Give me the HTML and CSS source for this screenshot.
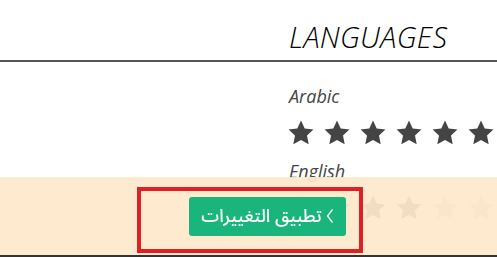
FILE: index.html
```html
<!DOCTYPE html>
<html lang="en">
<head>
    <meta charset="UTF-8">
    <meta name="viewport" content="width=device-width, initial-scale=1.0">
    <title>Languages</title>
    <link rel="stylesheet" href="styles.css">
</head>
<body>
    <div class="section-head">
        <h2 class="section-title">LANGUAGES</h2>
    </div>

    <div class="languages">
        <div class="lang">
            <div class="lang-name">Arabic</div>
            <div class="stars">
                <svg class="star" viewBox="0 0 26 26"><path d="M13 .5l3.7 8 8.76 1.05-6.47 6 1.71 8.65L13 19.9l-7.7 4.3 1.71-8.65-6.47-6L9.3 8.5z"/></svg>
                <svg class="star" viewBox="0 0 26 26"><path d="M13 .5l3.7 8 8.76 1.05-6.47 6 1.71 8.65L13 19.9l-7.7 4.3 1.71-8.65-6.47-6L9.3 8.5z"/></svg>
                <svg class="star" viewBox="0 0 26 26"><path d="M13 .5l3.7 8 8.76 1.05-6.47 6 1.71 8.65L13 19.9l-7.7 4.3 1.71-8.65-6.47-6L9.3 8.5z"/></svg>
                <svg class="star" viewBox="0 0 26 26"><path d="M13 .5l3.7 8 8.76 1.05-6.47 6 1.71 8.65L13 19.9l-7.7 4.3 1.71-8.65-6.47-6L9.3 8.5z"/></svg>
                <svg class="star" viewBox="0 0 26 26"><path d="M13 .5l3.7 8 8.76 1.05-6.47 6 1.71 8.65L13 19.9l-7.7 4.3 1.71-8.65-6.47-6L9.3 8.5z"/></svg>
                <svg class="star" viewBox="0 0 26 26"><path d="M13 .5l3.7 8 8.76 1.05-6.47 6 1.71 8.65L13 19.9l-7.7 4.3 1.71-8.65-6.47-6L9.3 8.5z"/></svg>
            </div>
        </div>
        <div class="lang">
            <div class="lang-name">English</div>
            <div class="stars">
                <svg class="star" viewBox="0 0 26 26"><path d="M13 .5l3.7 8 8.76 1.05-6.47 6 1.71 8.65L13 19.9l-7.7 4.3 1.71-8.65-6.47-6L9.3 8.5z"/></svg>
                <svg class="star" viewBox="0 0 26 26"><path d="M13 .5l3.7 8 8.76 1.05-6.47 6 1.71 8.65L13 19.9l-7.7 4.3 1.71-8.65-6.47-6L9.3 8.5z"/></svg>
                <svg class="star" viewBox="0 0 26 26"><path d="M13 .5l3.7 8 8.76 1.05-6.47 6 1.71 8.65L13 19.9l-7.7 4.3 1.71-8.65-6.47-6L9.3 8.5z"/></svg>
                <svg class="star" viewBox="0 0 26 26"><path d="M13 .5l3.7 8 8.76 1.05-6.47 6 1.71 8.65L13 19.9l-7.7 4.3 1.71-8.65-6.47-6L9.3 8.5z"/></svg>
                <svg class="star off" viewBox="0 0 26 26"><path d="M13 .5l3.7 8 8.76 1.05-6.47 6 1.71 8.65L13 19.9l-7.7 4.3 1.71-8.65-6.47-6L9.3 8.5z"/></svg>
                <svg class="star off" viewBox="0 0 26 26"><path d="M13 .5l3.7 8 8.76 1.05-6.47 6 1.71 8.65L13 19.9l-7.7 4.3 1.71-8.65-6.47-6L9.3 8.5z"/></svg>
            </div>
        </div>
    </div>

    <div class="apply-bar">
        <div class="highlight">
            <button class="apply-btn" dir="rtl" lang="ar">
                <svg class="chevron" viewBox="0 0 8 16"><polyline points="6.5,1.5 1.5,8 6.5,14.5"/></svg>
                <span>تطبيق التغييرات</span>
            </button>
        </div>
    </div>
</body>
</html>
```

FILE: styles.css
```css
body {
    margin: 0;
    padding: 0;
    background: #fff;
    font-family: "Open Sans", "Noto Sans", sans-serif;
    color: #444;
    height: 257px;
    overflow: hidden;
}

.section-head {
    padding-left: 289px;
    border-bottom: 2px solid #555;
}

.section-title {
    margin: 0;
    padding: 22px 0 9px;
    font-size: 29px;
    line-height: 29px;
    font-style: italic;
    font-weight: 300;
    letter-spacing: 0.3px;
    color: #000;
}

.languages {
    padding-left: 288px;
    padding-top: 25px;
}

.lang-name {
    font-size: 18px;
    line-height: 18px;
    font-style: italic;
    color: #444;
    padding-left: 1px;
    margin-bottom: 15px;
}

.stars {
    display: flex;
    gap: 10px;
    margin-bottom: 16px;
}

.star {
    width: 26px;
    height: 26px;
    fill: #444;
}

.star.off {
    fill: #c8c8c8;
}

/* bar that floats over the page */
.apply-bar {
    position: fixed;
    left: 0;
    right: 0;
    top: 177px;
    height: 80px;
    box-sizing: border-box;
    background: rgba(253, 232, 203, 0.93);
    border-bottom: 2px solid #333;
    display: flex;
    padding-left: 137px;
    padding-top: 10px;
}

.highlight {
    border: 4px solid #df1f26;
    padding: 6px 13px 13px 48px;
    height: 66px;
    box-sizing: border-box;
    width: 226px;
}

.apply-btn {
    display: flex;
    align-items: center;
    justify-content: center;
    gap: 4px;
    width: 157px;
    height: 39px;
    padding: 0 0 2px;
    border: none;
    border-radius: 3px;
    background: #19b57c;
    color: #fff;
    font-family: "Noto Sans Arabic", "DejaVu Sans", sans-serif;
    font-size: 18px;
    font-weight: 500;
    cursor: pointer;
}

.chevron {
    width: 8px;
    height: 16px;
    fill: none;
    stroke: #fff;
    stroke-width: 1.3;
}
```
